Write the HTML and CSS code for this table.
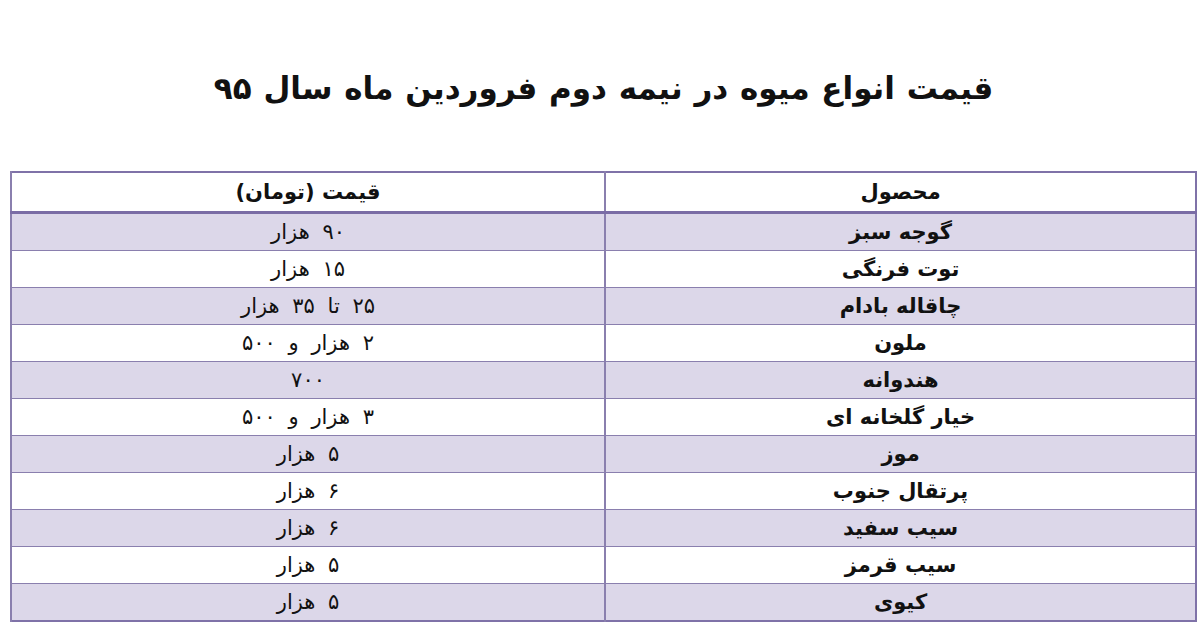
FILE: index.html
```html
<!DOCTYPE html>
<html lang="fa" dir="rtl">
<head>
<meta charset="utf-8">
<title>قیمت انواع میوه</title>
<link rel="stylesheet" href="styles.css">
</head>
<body>
<div class="page">
  <h1 class="title">قیمت انواع میوه در نیمه دوم فروردین ماه سال <span class="num">۹۵</span></h1>
  <table class="prices">
    <thead>
      <tr><th class="name">محصول</th><th class="price">قیمت (تومان)</th></tr>
    </thead>
    <tbody>
      <tr class="alt"><td class="name">گوجه سبز</td><td class="price"><span class="num">۹۰</span> هزار</td></tr>
      <tr><td class="name">توت فرنگی</td><td class="price"><span class="num">۱۵</span> هزار</td></tr>
      <tr class="alt"><td class="name">چاقاله بادام</td><td class="price"><span class="num">۲۵</span> تا <span class="num">۳۵</span> هزار</td></tr>
      <tr><td class="name">ملون</td><td class="price"><span class="num">۲</span> هزار و <span class="num">۵۰۰</span></td></tr>
      <tr class="alt"><td class="name">هندوانه</td><td class="price"><span class="num">۷۰۰</span></td></tr>
      <tr><td class="name">خیار گلخانه ای</td><td class="price"><span class="num">۳</span> هزار و <span class="num">۵۰۰</span></td></tr>
      <tr class="alt"><td class="name">موز</td><td class="price"><span class="num">۵</span> هزار</td></tr>
      <tr><td class="name">پرتقال جنوب</td><td class="price"><span class="num">۶</span> هزار</td></tr>
      <tr class="alt"><td class="name">سیب سفید</td><td class="price"><span class="num">۶</span> هزار</td></tr>
      <tr><td class="name">سیب قرمز</td><td class="price"><span class="num">۵</span> هزار</td></tr>
      <tr class="alt"><td class="name">کیوی</td><td class="price"><span class="num">۵</span> هزار</td></tr>
    </tbody>
  </table>
</div>
</body>
</html>
```
FILE: styles.css
```css
html, body {
  margin: 0;
  padding: 0;
  background: #ffffff;
}
body {
  font-family: "DejaVu Sans", "Noto Sans", sans-serif;
  color: #111111;
}
.page {
  width: 1200px;
  padding: 0 3px 0 10px;
  box-sizing: border-box;
}
.title {
  margin: 0;
  padding-top: 68px;
  height: 103px;
  line-height: 40px;
  font-size: 31px;
  font-weight: bold;
  word-spacing: 1px;
  text-align: center;
  box-sizing: content-box;
}
.title .num {
  letter-spacing: 6px;
}
.prices {
  width: 100%;
  border-collapse: collapse;
  border: 2px solid #7f72a8;
  table-layout: fixed;
}
.prices th,
.prices td {
  text-align: center;
  padding: 0;
  border-left: 2px solid #8a7fae;
  border-bottom: 1px solid #8a7fae;
  font-size: 21px;
}
.prices th {
  height: 38px;
  border-bottom: 3px solid #7a6ca5;
  font-weight: bold;
}
.prices td {
  height: 36px;
}
.prices td.name {
  font-weight: bold;
}
.prices td.price {
  font-weight: normal;
  word-spacing: 6px;
}
.prices .num {
  letter-spacing: 5px;
}
.prices th.name,
.prices td.name {
  width: 49.7%;
}
.prices tr.alt td {
  background: #dcd7e9;
}
```
